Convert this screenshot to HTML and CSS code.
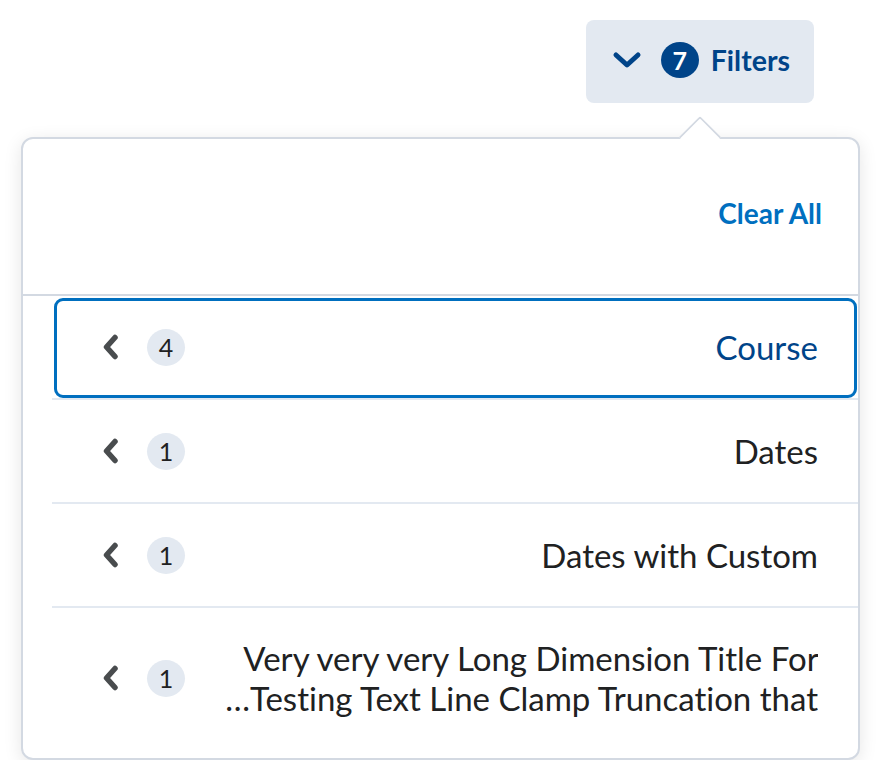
FILE: index.html
```html
<!DOCTYPE html>
<html lang="en" dir="rtl">
<head>
<meta charset="utf-8">
<title>Filters</title>
<link rel="stylesheet" href="styles.css">
</head>
<body>
<div class="page">
  <div class="top">
    <button class="filter-btn" type="button">
      <span class="filter-label">Filters</span>
      <span class="filter-count">7</span>
      <svg class="chev-down" width="30" height="18" viewBox="0 0 30 18" aria-hidden="true"><polyline points="4,4 15,14 26,4" fill="none" stroke="#004489" stroke-width="5" stroke-linecap="round" stroke-linejoin="round"/></svg>
    </button>
  </div>
  <div class="dropdown">
    <div class="pointer"></div>
    <div class="header">
      <a class="clear-all" href="#">Clear All</a>
    </div>
    <ul class="list">
      <li class="item focused">
        <span class="item-text">Course</span>
        <span class="count">4</span>
        <svg class="chev-left" width="18" height="26" viewBox="0 0 18 26" aria-hidden="true"><polyline points="13,3.5 4.5,13 13,22.5" fill="none" stroke="#494c4e" stroke-width="5.5" stroke-linecap="round" stroke-linejoin="round"/></svg>
      </li>
      <li class="item">
        <span class="item-text">Dates</span>
        <span class="count">1</span>
        <svg class="chev-left" width="18" height="26" viewBox="0 0 18 26" aria-hidden="true"><polyline points="13,3.5 4.5,13 13,22.5" fill="none" stroke="#494c4e" stroke-width="5.5" stroke-linecap="round" stroke-linejoin="round"/></svg>
      </li>
      <li class="item">
        <span class="item-text">Dates with Custom</span>
        <span class="count">1</span>
        <svg class="chev-left" width="18" height="26" viewBox="0 0 18 26" aria-hidden="true"><polyline points="13,3.5 4.5,13 13,22.5" fill="none" stroke="#494c4e" stroke-width="5.5" stroke-linecap="round" stroke-linejoin="round"/></svg>
      </li>
      <li class="item last">
        <span class="item-text clamp">Very very very Long Dimension Title For Testing Text Line Clamp Truncation that goes on past the second line</span>
        <span class="count">1</span>
        <svg class="chev-left" width="18" height="26" viewBox="0 0 18 26" aria-hidden="true"><polyline points="13,3.5 4.5,13 13,22.5" fill="none" stroke="#494c4e" stroke-width="5.5" stroke-linecap="round" stroke-linejoin="round"/></svg>
      </li>
    </ul>
  </div>
</div>
</body>
</html>
```

FILE: styles.css
```css
html, body {
  margin: 0;
  padding: 0;
  background: #ffffff;
}
body {
  font-family: Lato, "Noto Sans", sans-serif;
  color: #202122;
}
.page {
  padding: 20px 20px 0 21px;
}
.top {
  display: flex;
  justify-content: flex-start;
  padding-right: 46px;
}
.filter-btn {
  display: flex;
  align-items: center;
  height: 83px;
  width: 228px;
  padding: 0 24px 4px 27px;
  border: none;
  border-radius: 8px;
  background: #e3e9f1;
  font-family: Lato, "Noto Sans", sans-serif;
  cursor: pointer;
  box-sizing: border-box;
}
.filter-label {
  font-size: 28.5px;
  font-weight: 700;
  color: #004489;
  white-space: nowrap;
}
.filter-count {
  width: 38px;
  height: 36px;
  border-radius: 50%;
  background: #004489;
  color: #ffffff;
  font-size: 25px;
  font-weight: 700;
  display: flex;
  align-items: center;
  justify-content: center;
  margin-right: 12px;
  margin-left: 19px;
  flex: none;
}
.chev-down {
  display: block;
  flex: none;
}
.dropdown {
  position: relative;
  margin-top: 34px;
  border: 2px solid #d3d9e2;
  border-radius: 12px;
  background: #ffffff;
  box-shadow: 0 4px 18px rgba(0, 0, 0, 0.10);
  padding-bottom: 8px;
}
.pointer {
  position: absolute;
  top: -17px;
  right: 143px;
  width: 30px;
  height: 30px;
  background: #ffffff;
  border-top: 2px solid #d3d9e2;
  border-left: 2px solid #d3d9e2;
  transform: rotate(45deg);
  box-sizing: border-box;
  border-top-left-radius: 3px;
}
.header {
  height: 157px;
  display: flex;
  align-items: center;
  padding-right: 36px;
  padding-bottom: 8px;
  box-sizing: border-box;
  border-bottom: 2px solid #d3d9e2;
}
.clear-all {
  font-size: 28px;
  font-weight: 700;
  color: #006fbf;
  text-decoration: none;
}
.list {
  list-style: none;
  margin: 0;
  padding: 0 0 0 29px;
}
.item {
  position: relative;
  display: flex;
  align-items: center;
  min-height: 104px;
  padding: 0 40px 0 50px;
  border-bottom: 2px solid #e3e9f1;
  box-sizing: border-box;
}
.item.last {
  border-bottom: none;
  padding-top: 30px;
  padding-bottom: 32px;
}
.item.focused::after {
  content: "";
  position: absolute;
  top: 2px;
  bottom: 0;
  left: 2px;
  right: 1px;
  border: 3px solid #006fbf;
  border-radius: 9px;
  pointer-events: none;
}
.item.focused .item-text {
  color: #004489;
}
.item-text {
  flex: 1;
  font-size: 33px;
  line-height: 40px;
  color: #202122;
  margin-left: 32px;
  font-variant-ligatures: none;
}
.clamp {
  display: -webkit-box;
  -webkit-box-orient: vertical;
  -webkit-line-clamp: 2;
  overflow: hidden;
}
.count {
  width: 38px;
  height: 37px;
  border-radius: 50%;
  background: #e3e9f1;
  color: #202122;
  font-size: 25px;
  display: flex;
  align-items: center;
  justify-content: center;
  margin-left: 27px;
  flex: none;
}
.chev-left {
  display: block;
  flex: none;
}
```
